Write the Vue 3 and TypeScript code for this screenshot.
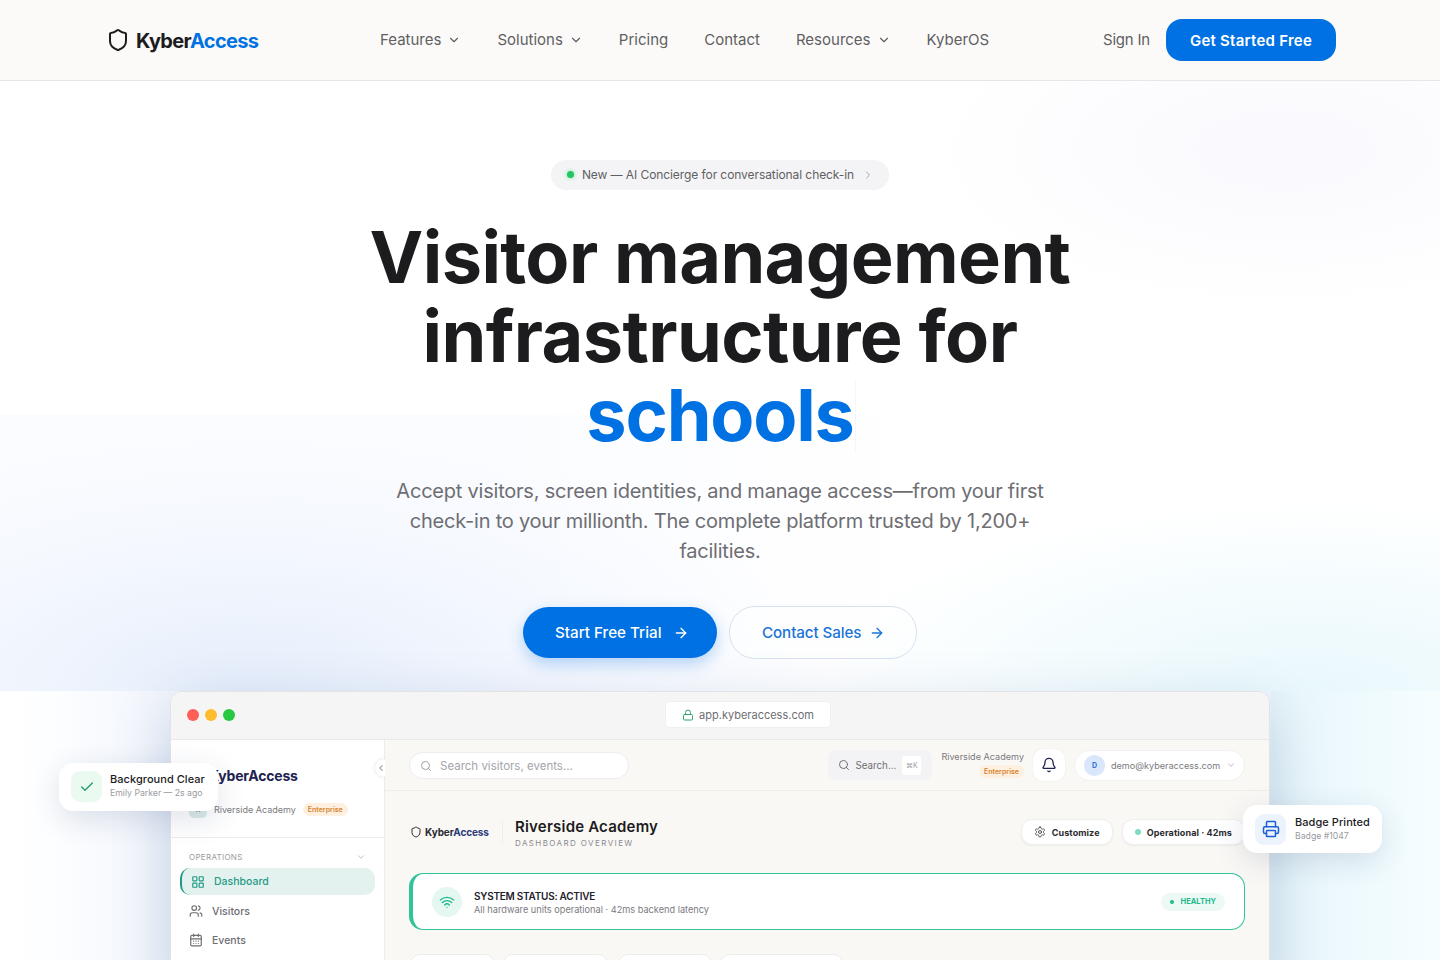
<script setup lang="ts">
const navLinks = [
  { label: 'Features', caret: true },
  { label: 'Solutions', caret: true },
  { label: 'Pricing', caret: false },
  { label: 'Contact', caret: false },
  { label: 'Resources', caret: true },
  { label: 'KyberOS', caret: false },
]
</script>

<template>
  <div class="page">
    <header class="nav">
      <a class="logo">
        <svg width="24" height="24" viewBox="0 0 24 24" fill="none" stroke="#1c1c1e" stroke-width="2" stroke-linecap="round" stroke-linejoin="round">
          <path d="M20 13c0 5-3.5 7.5-7.66 8.95a1 1 0 0 1-.67-.01C7.5 20.5 4 18 4 13V6a1 1 0 0 1 1-1c2 0 4.5-1.2 6.24-2.72a1.17 1.17 0 0 1 1.52 0C14.51 3.81 17 5 19 5a1 1 0 0 1 1 1z" />
        </svg>
        <span class="logo-text">Kyber<span class="blue">Access</span></span>
      </a>
      <nav class="links">
        <a v-for="l in navLinks" :key="l.label" class="link">
          {{ l.label }}
          <svg v-if="l.caret" width="14" height="14" viewBox="0 0 24 24" fill="none" stroke="currentColor" stroke-width="2" stroke-linecap="round" stroke-linejoin="round"><path d="m6 9 6 6 6-6" /></svg>
        </a>
      </nav>
      <div class="nav-right">
        <a class="signin">Sign In</a>
        <a class="get-started">Get Started Free</a>
      </div>
    </header>

    <main class="hero">
      <div class="glow glow-a" />
      <div class="glow glow-b" />
      <div class="glow glow-c" />
      <div class="hero-inner">
        <div class="pill">
          <span class="pill-dot" />
          <span>New — AI Concierge for conversational check-in</span>
          <svg width="12" height="12" viewBox="0 0 24 24" fill="none" stroke="#a8a8ad" stroke-width="2" stroke-linecap="round" stroke-linejoin="round"><path d="m9 18 6-6-6-6" /></svg>
        </div>
        <h1>Visitor management<br />infrastructure for<br /><span class="blue typed">schools</span></h1>
        <p class="sub">Accept visitors, screen identities, and manage access—from your first check-in to your millionth. The complete platform trusted by 1,200+ facilities.</p>
        <div class="cta">
          <a class="btn primary">
            Start Free Trial
            <svg width="16" height="16" viewBox="0 0 24 24" fill="none" stroke="currentColor" stroke-width="2" stroke-linecap="round" stroke-linejoin="round"><path d="M5 12h14" /><path d="m12 5 7 7-7 7" /></svg>
          </a>
          <a class="btn ghost">
            Contact Sales
            <svg width="16" height="16" viewBox="0 0 24 24" fill="none" stroke="currentColor" stroke-width="2" stroke-linecap="round" stroke-linejoin="round"><path d="M5 12h14" /><path d="m12 5 7 7-7 7" /></svg>
          </a>
        </div>
      </div>

      <section class="stage">
        <div class="window">
          <div class="chrome">
            <div class="lights"><i class="red" /><i class="yellow" /><i class="green" /></div>
            <div class="url">
              <svg width="12" height="12" viewBox="0 0 24 24" fill="none" stroke="#30a46c" stroke-width="2" stroke-linecap="round" stroke-linejoin="round"><rect x="3" y="11" width="18" height="11" rx="2" /><path d="M7 11V7a5 5 0 0 1 10 0v4" /></svg>
              app.kyberaccess.com
            </div>
          </div>
          <div class="app">
            <aside class="side">
              <div class="side-head">
                <div class="side-logo">KyberAccess</div>
                <div class="org">
                  <span class="org-av">R</span>
                  <span class="org-name">Riverside Academy</span>
                  <span class="tag">Enterprise</span>
                </div>
                <span class="collapse">
                  <svg width="10" height="10" viewBox="0 0 24 24" fill="none" stroke="#8a8a90" stroke-width="2.5" stroke-linecap="round" stroke-linejoin="round"><path d="m15 18-6-6 6-6" /></svg>
                </span>
              </div>
              <div class="side-nav">
                <div class="group">
                  <span>OPERATIONS</span>
                  <svg width="10" height="10" viewBox="0 0 24 24" fill="none" stroke="#b5b5ba" stroke-width="2" stroke-linecap="round" stroke-linejoin="round"><path d="m6 9 6 6 6-6" /></svg>
                </div>
                <a class="item active">
                  <svg width="14" height="14" viewBox="0 0 24 24" fill="none" stroke="currentColor" stroke-width="2" stroke-linecap="round" stroke-linejoin="round"><rect x="3" y="3" width="7" height="7" rx="1" /><rect x="14" y="3" width="7" height="7" rx="1" /><rect x="14" y="14" width="7" height="7" rx="1" /><rect x="3" y="14" width="7" height="7" rx="1" /></svg>
                  Dashboard
                </a>
                <a class="item">
                  <svg width="14" height="14" viewBox="0 0 24 24" fill="none" stroke="currentColor" stroke-width="2" stroke-linecap="round" stroke-linejoin="round"><path d="M16 21v-2a4 4 0 0 0-4-4H6a4 4 0 0 0-4 4v2" /><circle cx="9" cy="7" r="4" /><path d="M16 3.13a4 4 0 0 1 0 7.75" /><path d="M22 21v-2a4 4 0 0 0-3-3.87" /></svg>
                  Visitors
                </a>
                <a class="item">
                  <svg width="14" height="14" viewBox="0 0 24 24" fill="none" stroke="currentColor" stroke-width="2" stroke-linecap="round" stroke-linejoin="round"><rect x="3" y="4" width="18" height="18" rx="2" /><path d="M16 2v4M8 2v4M3 10h18M8 14h.01M12 14h.01M16 14h.01M8 18h.01M12 18h.01M16 18h.01" /></svg>
                  Events
                </a>
              </div>
            </aside>
            <div class="content">
              <div class="topbar">
                <div class="search">
                  <svg width="12" height="12" viewBox="0 0 24 24" fill="none" stroke="#a0a0a6" stroke-width="2" stroke-linecap="round" stroke-linejoin="round"><circle cx="11" cy="11" r="8" /><path d="m21 21-4.3-4.3" /></svg>
                  Search visitors, events...
                </div>
                <div class="top-right">
                  <div class="cmd">
                    <svg width="12" height="12" viewBox="0 0 24 24" fill="none" stroke="#6e6e73" stroke-width="2" stroke-linecap="round" stroke-linejoin="round"><circle cx="11" cy="11" r="8" /><path d="m21 21-4.3-4.3" /></svg>
                    <span>Search...</span>
                    <kbd>⌘K</kbd>
                  </div>
                  <div class="tenant">
                    <span>Riverside Academy</span>
                    <span class="tag">Enterprise</span>
                  </div>
                  <div class="bell">
                    <svg width="16" height="16" viewBox="0 0 24 24" fill="none" stroke="#1e2350" stroke-width="2" stroke-linecap="round" stroke-linejoin="round"><path d="M10.27 21a2 2 0 0 0 3.46 0" /><path d="M3.26 15.33A1 1 0 0 0 4 17h16a1 1 0 0 0 .74-1.67C19.41 13.96 18 12.5 18 8A6 6 0 0 0 6 8c0 4.5-1.41 5.96-2.74 7.33" /></svg>
                  </div>
                  <div class="user">
                    <span class="user-av">D</span>
                    <span>demo@kyberaccess.com</span>
                    <svg width="10" height="10" viewBox="0 0 24 24" fill="none" stroke="#b0b0b5" stroke-width="2" stroke-linecap="round" stroke-linejoin="round"><path d="m6 9 6 6 6-6" /></svg>
                  </div>
                </div>
              </div>
              <div class="board">
                <div class="board-head">
                  <div class="board-brand">
                    <svg width="12" height="12" viewBox="0 0 24 24" fill="none" stroke="#2a2a30" stroke-width="2" stroke-linecap="round" stroke-linejoin="round"><path d="M20 13c0 5-3.5 7.5-7.66 8.95a1 1 0 0 1-.67-.01C7.5 20.5 4 18 4 13V6a1 1 0 0 1 1-1c2 0 4.5-1.2 6.24-2.72a1.17 1.17 0 0 1 1.52 0C14.51 3.81 17 5 19 5a1 1 0 0 1 1 1z" /></svg>
                    <span class="brand-text">Kyber<span class="navy">Access</span></span>
                  </div>
                  <div class="board-title">
                    <div class="b-name">Riverside Academy</div>
                    <div class="b-sub">DASHBOARD OVERVIEW</div>
                  </div>
                  <div class="board-actions">
                    <span class="chip">
                      <svg width="12" height="12" viewBox="0 0 24 24" fill="none" stroke="#55555a" stroke-width="2" stroke-linecap="round" stroke-linejoin="round"><path d="M12.22 2h-.44a2 2 0 0 0-2 2v.18a2 2 0 0 1-1 1.73l-.43.25a2 2 0 0 1-2 0l-.15-.08a2 2 0 0 0-2.73.73l-.22.38a2 2 0 0 0 .73 2.73l.15.1a2 2 0 0 1 1 1.72v.51a2 2 0 0 1-1 1.74l-.15.09a2 2 0 0 0-.73 2.73l.22.38a2 2 0 0 0 2.73.73l.15-.08a2 2 0 0 1 2 0l.43.25a2 2 0 0 1 1 1.73V20a2 2 0 0 0 2 2h.44a2 2 0 0 0 2-2v-.18a2 2 0 0 1 1-1.73l.43-.25a2 2 0 0 1 2 0l.15.08a2 2 0 0 0 2.73-.73l.22-.39a2 2 0 0 0-.73-2.73l-.15-.08a2 2 0 0 1-1-1.74v-.5a2 2 0 0 1 1-1.74l.15-.09a2 2 0 0 0 .73-2.73l-.22-.38a2 2 0 0 0-2.73-.73l-.15.08a2 2 0 0 1-2 0l-.43-.25a2 2 0 0 1-1-1.73V4a2 2 0 0 0-2-2z" /><circle cx="12" cy="12" r="3" /></svg>
                      Customize
                    </span>
                    <span class="chip"><i class="op-dot" />Operational · 42ms</span>
                  </div>
                </div>
                <div class="status">
                  <span class="wifi">
                    <svg width="16" height="16" viewBox="0 0 24 24" fill="none" stroke="#1fb98c" stroke-width="2" stroke-linecap="round" stroke-linejoin="round"><path d="M12 20h.01" /><path d="M2 8.82a15 15 0 0 1 20 0" /><path d="M5 12.86a10 10 0 0 1 14 0" /><path d="M8.5 16.43a5 5 0 0 1 7 0" /></svg>
                  </span>
                  <div class="status-text">
                    <div class="s-title">SYSTEM STATUS: ACTIVE</div>
                    <div class="s-sub">All hardware units operational · 42ms backend latency</div>
                  </div>
                  <span class="healthy"><i />HEALTHY</span>
                </div>
                <div class="tabs">
                  <span class="tab t1" /><span class="tab t2" /><span class="tab t3" /><span class="tab t4" />
                </div>
              </div>
            </div>
          </div>
        </div>

        <div class="toast toast-left">
          <span class="toast-icon green-bg">
            <svg width="16" height="16" viewBox="0 0 24 24" fill="none" stroke="#1f9d63" stroke-width="2" stroke-linecap="round" stroke-linejoin="round"><path d="M20 6 9 17l-5-5" /></svg>
          </span>
          <div class="toast-text">
            <div class="t-title">Background Clear</div>
            <div class="t-sub">Emily Parker — 2s ago</div>
          </div>
        </div>
        <div class="toast toast-right">
          <span class="toast-icon blue-bg">
            <svg width="18" height="18" viewBox="0 0 24 24" fill="none" stroke="#1d5fd6" stroke-width="2" stroke-linecap="round" stroke-linejoin="round"><path d="M6 18H4a2 2 0 0 1-2-2v-5a2 2 0 0 1 2-2h16a2 2 0 0 1 2 2v5a2 2 0 0 1-2 2h-2" /><path d="M6 9V3a1 1 0 0 1 1-1h10a1 1 0 0 1 1 1v6" /><rect x="6" y="14" width="12" height="8" rx="1" /></svg>
          </span>
          <div class="toast-text">
            <div class="t-title">Badge Printed</div>
            <div class="t-sub">Badge #1047</div>
          </div>
        </div>
      </section>
    </main>
  </div>
</template>

<style>
html, body { margin: 0; background: #fff; overflow: hidden; }
</style>

<style scoped>
.page {
  height: 960px;
  overflow: hidden;
  font-family: 'Inter', 'Liberation Sans', sans-serif;
  color: #1c1c1e;
}
a { text-decoration: none; }
.blue { color: #0071e3; }

.nav {
  height: 80px;
  border-bottom: 1px solid #e6e6e8;
  background: #fbfaf8;
  display: flex;
  align-items: center;
  padding: 0 104px;
  position: relative;
  z-index: 2;
}
.logo { display: flex; align-items: center; gap: 6px; width: 276px; padding-left: 2px; box-sizing: border-box; }
.logo-text { font-size: 20px; font-weight: 700; letter-spacing: -0.7px; position: relative; top: 1px; }
.links { display: flex; gap: 36px; align-items: center; }
.link {
  display: flex; align-items: center; gap: 6px;
  font-size: 15px; color: #5f5f63; line-height: 20px;
}
.nav-right { margin-left: auto; display: flex; align-items: center; gap: 16px; }
.signin { font-size: 15px; color: #5f5f63; letter-spacing: -0.2px; position: relative; top: -1px; }
.get-started {
  height: 42px; width: 170px; border-radius: 16px; background: #0071e3; color: #fff;
  font-size: 15px; font-weight: 600; letter-spacing: 0.25px; display: flex; align-items: center; justify-content: center;
}

.hero {
  position: relative;
  height: 879px;
  overflow: hidden;
  background: #fff;
}
.glow { position: absolute; pointer-events: none; }
.glow-a {
  top: 0; right: 0; width: 520px; height: 230px;
  background: radial-gradient(ellipse at 70% 30%, #f9f9fe 0%, rgba(255,255,255,0) 70%);
}
.glow-b {
  top: 334px; left: 0; width: 960px; height: 276px;
  background: radial-gradient(ellipse 60% 95% at 26% 100%, #e6eefb 0%, rgba(241,246,254,.7) 55%, rgba(255,255,255,0) 100%), linear-gradient(90deg, #fbfcff 0%, #fbfcff 50%, rgba(255,255,255,0) 100%);
}
.glow-c {
  top: 420px; right: 0; width: 820px; height: 190px;
  background: radial-gradient(ellipse 60% 100% at 84% 100%, #e9f8fc 0%, rgba(241,251,254,.65) 60%, rgba(255,255,255,0) 100%);
}
.hero-inner {
  position: relative;
  display: flex; flex-direction: column; align-items: center;
  padding-top: 79px;
}
.pill {
  height: 30px; width: 338px; box-sizing: border-box;
  border-radius: 15px; background: #f4f4f6; color: #5f5f63;
  display: flex; align-items: center; justify-content: center; gap: 8px;
  font-size: 12px; letter-spacing: -0.08px;
}
.pill span:nth-child(2) { position: relative; top: -1px; }
.pill-dot { width: 7px; height: 7px; border-radius: 50%; background: #22c55e; box-shadow: 0 0 4px #7be3a2; margin-left: 1px; margin-top: -1px; }
h1 {
  margin: 27px 0 0;
  font-size: 72px; line-height: 79px; font-weight: 700; letter-spacing: -0.6px; text-align: center;
  color: #1c1c1e;
}
.typed { position: relative; display: inline-block; letter-spacing: -1.2px; }
.typed::after {
  content: '';
  position: absolute; right: -2px; top: 6px;
  width: 1px; height: 70px;
  background: rgba(0, 113, 227, 0.06);
}
.sub {
  margin: 22px 0 0; width: 672px; text-align: center;
  font-size: 20px; line-height: 30px; color: #6e6e73; letter-spacing: -0.22px;
}
.cta { display: flex; gap: 12px; margin-top: 40px; align-items: center; }
.btn {
  height: 51px; border-radius: 26px; display: flex; align-items: center;
  font-size: 15.2px; font-weight: 500; box-sizing: border-box; padding-left: 32px;
}
.primary { width: 194px; background: #0071e3; color: #fff; gap: 12px; box-shadow: 0 6px 16px rgba(0,113,227,.28); }
.ghost { width: 188px; height: 53px; border: 1px solid #d6e2f2; color: #1a73d8; gap: 8px; letter-spacing: -0.1px; background: rgba(255,255,255,.4); }

.stage {
  position: absolute; left: 0; right: 0; top: 610px; height: 269px;
  background: linear-gradient(90deg, #fff 0, #fdfeff 50px, #f1f5fc 170px, #f1f5fc 1270px, #e6f4f9 1272px, #eaf7fb 1300px, #f0fbfe 1380px, #f6fdff 1440px);
}
.window {
  position: absolute; left: 170px; top: 0; width: 1100px; height: 300px; box-sizing: border-box;
  border: 1px solid #e3e3e6; border-radius: 12px 12px 0 0; overflow: hidden; background: #fff;
  box-shadow: 0 20px 60px rgba(10, 60, 130, .2);
}
.chrome {
  height: 48px; box-sizing: border-box; padding-bottom: 2px; background: #f6f5f5; border-bottom: 1px solid #e8e8ea;
  display: flex; align-items: center; justify-content: center; position: relative;
}
.lights { position: absolute; left: 16px; top: 17px; display: flex; gap: 6px; }
.lights i { width: 12px; height: 12px; border-radius: 50%; display: block; }
.red { background: #ff5f57; } .yellow { background: #febc2e; } .green { background: #28c840; }
.url {
  height: 27px; width: 166px; margin-left: 56px; background: #fff; border-radius: 4px; border: 1px solid #efefef; box-sizing: border-box;
  display: flex; align-items: center; justify-content: center; gap: 5px; font-size: 11px; color: #6e6e73;
}
.app { display: flex; height: 252px; }
.side { width: 213px; flex: none; border-right: 1px solid #eeecea; background: #fff; }
.side-head { height: 98px; border-bottom: 1px solid #ededed; position: relative; box-sizing: border-box; padding: 27px 0 0 18px; }
.side-logo { font-size: 14px; font-weight: 700; color: #1e2350; letter-spacing: -0.2px; padding-left: 20px; line-height: 18px; }
.org { display: flex; align-items: center; gap: 7px; margin-top: 15px; font-size: 9px; color: #7a7a80; }
.org-av { width: 18px; height: 18px; border-radius: 5px; background: #dcebe8; color: #556; font-size: 7px; display: flex; align-items: center; justify-content: center; }
.tag { background: #fdf0e0; color: #d9822b; font-size: 7px; font-weight: 600; padding: 2px 5px; border-radius: 7px; }
.collapse { position: absolute; right: -9px; top: 19px; width: 18px; height: 18px; box-sizing: border-box; padding-right: 7px; border-radius: 50%; background: #fff; box-shadow: 0 0 3px rgba(0,0,0,.15); display: flex; align-items: center; justify-content: center; }
.side-nav { padding: 10px 9px 0 9px; }
.group { display: flex; justify-content: space-between; align-items: center; padding: 0 9px; font-size: 8px; color: #9a9aa0; letter-spacing: .3px; height: 17px; margin-bottom: 3px; }
.item { display: flex; align-items: center; gap: 9px; height: 28px; margin-top: 1px; padding-left: 9px; font-size: 10.5px; color: #6e6e73; font-weight: 500; }
.item.active { background: #e4f2ef; color: #1f9b85; border-radius: 10px; border-left: 2px solid #1f9b85; margin-top: 1px; height: 27px; margin-bottom: 2px; }
.content { flex: 1; background: #faf8f5; min-width: 0; position: relative; }
.topbar { height: 51px; border-bottom: 1px solid #f0eeea; display: flex; align-items: center; justify-content: space-between; padding: 0 24px; box-sizing: border-box; }
.search { width: 220px; height: 27px; box-sizing: border-box; border: 1px solid #ececec; border-radius: 14px; background: #fff; display: flex; align-items: center; gap: 8px; padding: 1px 0 0 10px; font-size: 11.5px; color: #a4a4aa; }
.top-right { display: flex; align-items: center; gap: 9px; }
.cmd { height: 30px; width: 104px; box-sizing: border-box; background: #f3f3f5; border-radius: 8px; display: flex; align-items: center; gap: 5px; padding-left: 10px; font-size: 9.8px; color: #6e6e73; }
kbd { background: #fff; color: #a0a0a6; font-size: 7px; border-radius: 3px; width: 19px; height: 19px; display: flex; align-items: center; justify-content: center; margin-left: 1px; font-family: inherit; }
.tenant { display: flex; flex-direction: column; align-items: flex-end; font-size: 9.1px; color: #7a7a80; gap: 3px; margin-top: -1px; }
.bell { width: 32px; height: 32px; background: #fff; border-radius: 10px; display: flex; align-items: center; justify-content: center; box-shadow: 0 0 2px rgba(0,0,0,.08); }
.user { height: 31px; width: 171px; box-sizing: border-box; background: #fff; border-radius: 16px; display: flex; align-items: center; gap: 6px; padding-left: 9px; font-size: 9.1px; color: #7a7a80; border: 1px solid #f1f1f1; }
.user-av { width: 21px; height: 21px; border-radius: 50%; background: #d9e6fb; color: #2f6fdb; font-size: 7px; font-weight: 700; display: flex; align-items: center; justify-content: center; }
.board { padding: 0 24px; }
.board-head { display: flex; align-items: center; height: 82px; }
.board-brand { display: flex; align-items: center; gap: 3px; width: 94px; flex: none; border-right: 1px solid #eeecea; height: 22px; padding-left: 1px; box-sizing: border-box; }
.brand-text { font-size: 10px; font-weight: 700; color: #2a2a30; letter-spacing: -0.1px; }
.navy { color: #2b3a78; }
.board-title { padding-left: 12px; margin-top: 4px; }
.b-name { font-size: 15px; font-weight: 600; color: #1c1c22; line-height: 18px; letter-spacing: 0.2px; }
.b-sub { font-size: 8px; color: #8a8a90; letter-spacing: 1.4px; line-height: 14px; }
.board-actions { margin-left: auto; display: flex; gap: 9px; }
.chip { height: 26px; box-sizing: border-box; border: 1px solid #efefef; background: #fff; border-radius: 11px; display: flex; align-items: center; gap: 6px; padding: 0 12px; font-size: 9px; font-weight: 700; color: #2a2a30; letter-spacing: 0.1px; box-shadow: 0 1px 2px rgba(0,0,0,.05); }
.op-dot { width: 6px; height: 6px; border-radius: 50%; background: #7ddcc0; display: block; }
.status { height: 57px; box-sizing: border-box; background: #fff; border: 1px solid #33c39a; border-left-width: 4px; border-radius: 14px; display: flex; align-items: center; padding: 0 19px; }
.wifi { width: 30px; height: 30px; border-radius: 50%; background: #e5f7f1; display: flex; align-items: center; justify-content: center; }
.status-text { margin-left: 12px; padding-top: 2px; }
.s-title { font-size: 10px; font-weight: 600; color: #22222a; line-height: 14px; letter-spacing: -0.25px; }
.s-sub { font-size: 9.2px; color: #7a7a80; line-height: 13px; }
.healthy { margin-left: auto; height: 18px; box-sizing: border-box; display: flex; align-items: center; gap: 7px; padding: 0 9px; border-radius: 10px; background: #edf9f5; color: #1fb98c; font-size: 7.5px; font-weight: 700; }
.healthy i { width: 4px; height: 4px; border-radius: 50%; background: #1fb98c; display: block; }
.tabs { display: flex; gap: 8px; margin-top: 24px; padding-left: 1px; }
.tab { height: 24px; background: #fff; border: 1px solid #ececec; border-radius: 10px; display: block; box-sizing: border-box; }
.t1 { width: 85px; } .t2 { width: 105px; } .t3 { width: 94px; margin-left: 2px; } .t4 { width: 123px; }

.toast {
  position: absolute; background: #fff; border-radius: 14px; height: 48px; display: flex; align-items: center; gap: 8px;
  box-shadow: 0 8px 30px rgba(30,50,100,.14);
}
.toast-left { left: 59px; top: 71.5px; width: 159px; padding-left: 12px; box-sizing: border-box; }
.toast-right { left: 1243px; top: 114px; width: 139px; padding-left: 12px; box-sizing: border-box; gap: 9px; }
.toast-icon { width: 31px; height: 31px; border-radius: 9px; display: flex; align-items: center; justify-content: center; flex: none; }
.green-bg { background: #eafaf1; } .blue-bg { background: #edf3fd; }
.toast-text { margin-top: -1px; }
.t-title { font-size: 11px; font-weight: 500; color: #1c1c1e; line-height: 14px; letter-spacing: 0.05px; }
.t-sub { font-size: 8.7px; color: #9a9aa0; line-height: 14px; }
</style>
